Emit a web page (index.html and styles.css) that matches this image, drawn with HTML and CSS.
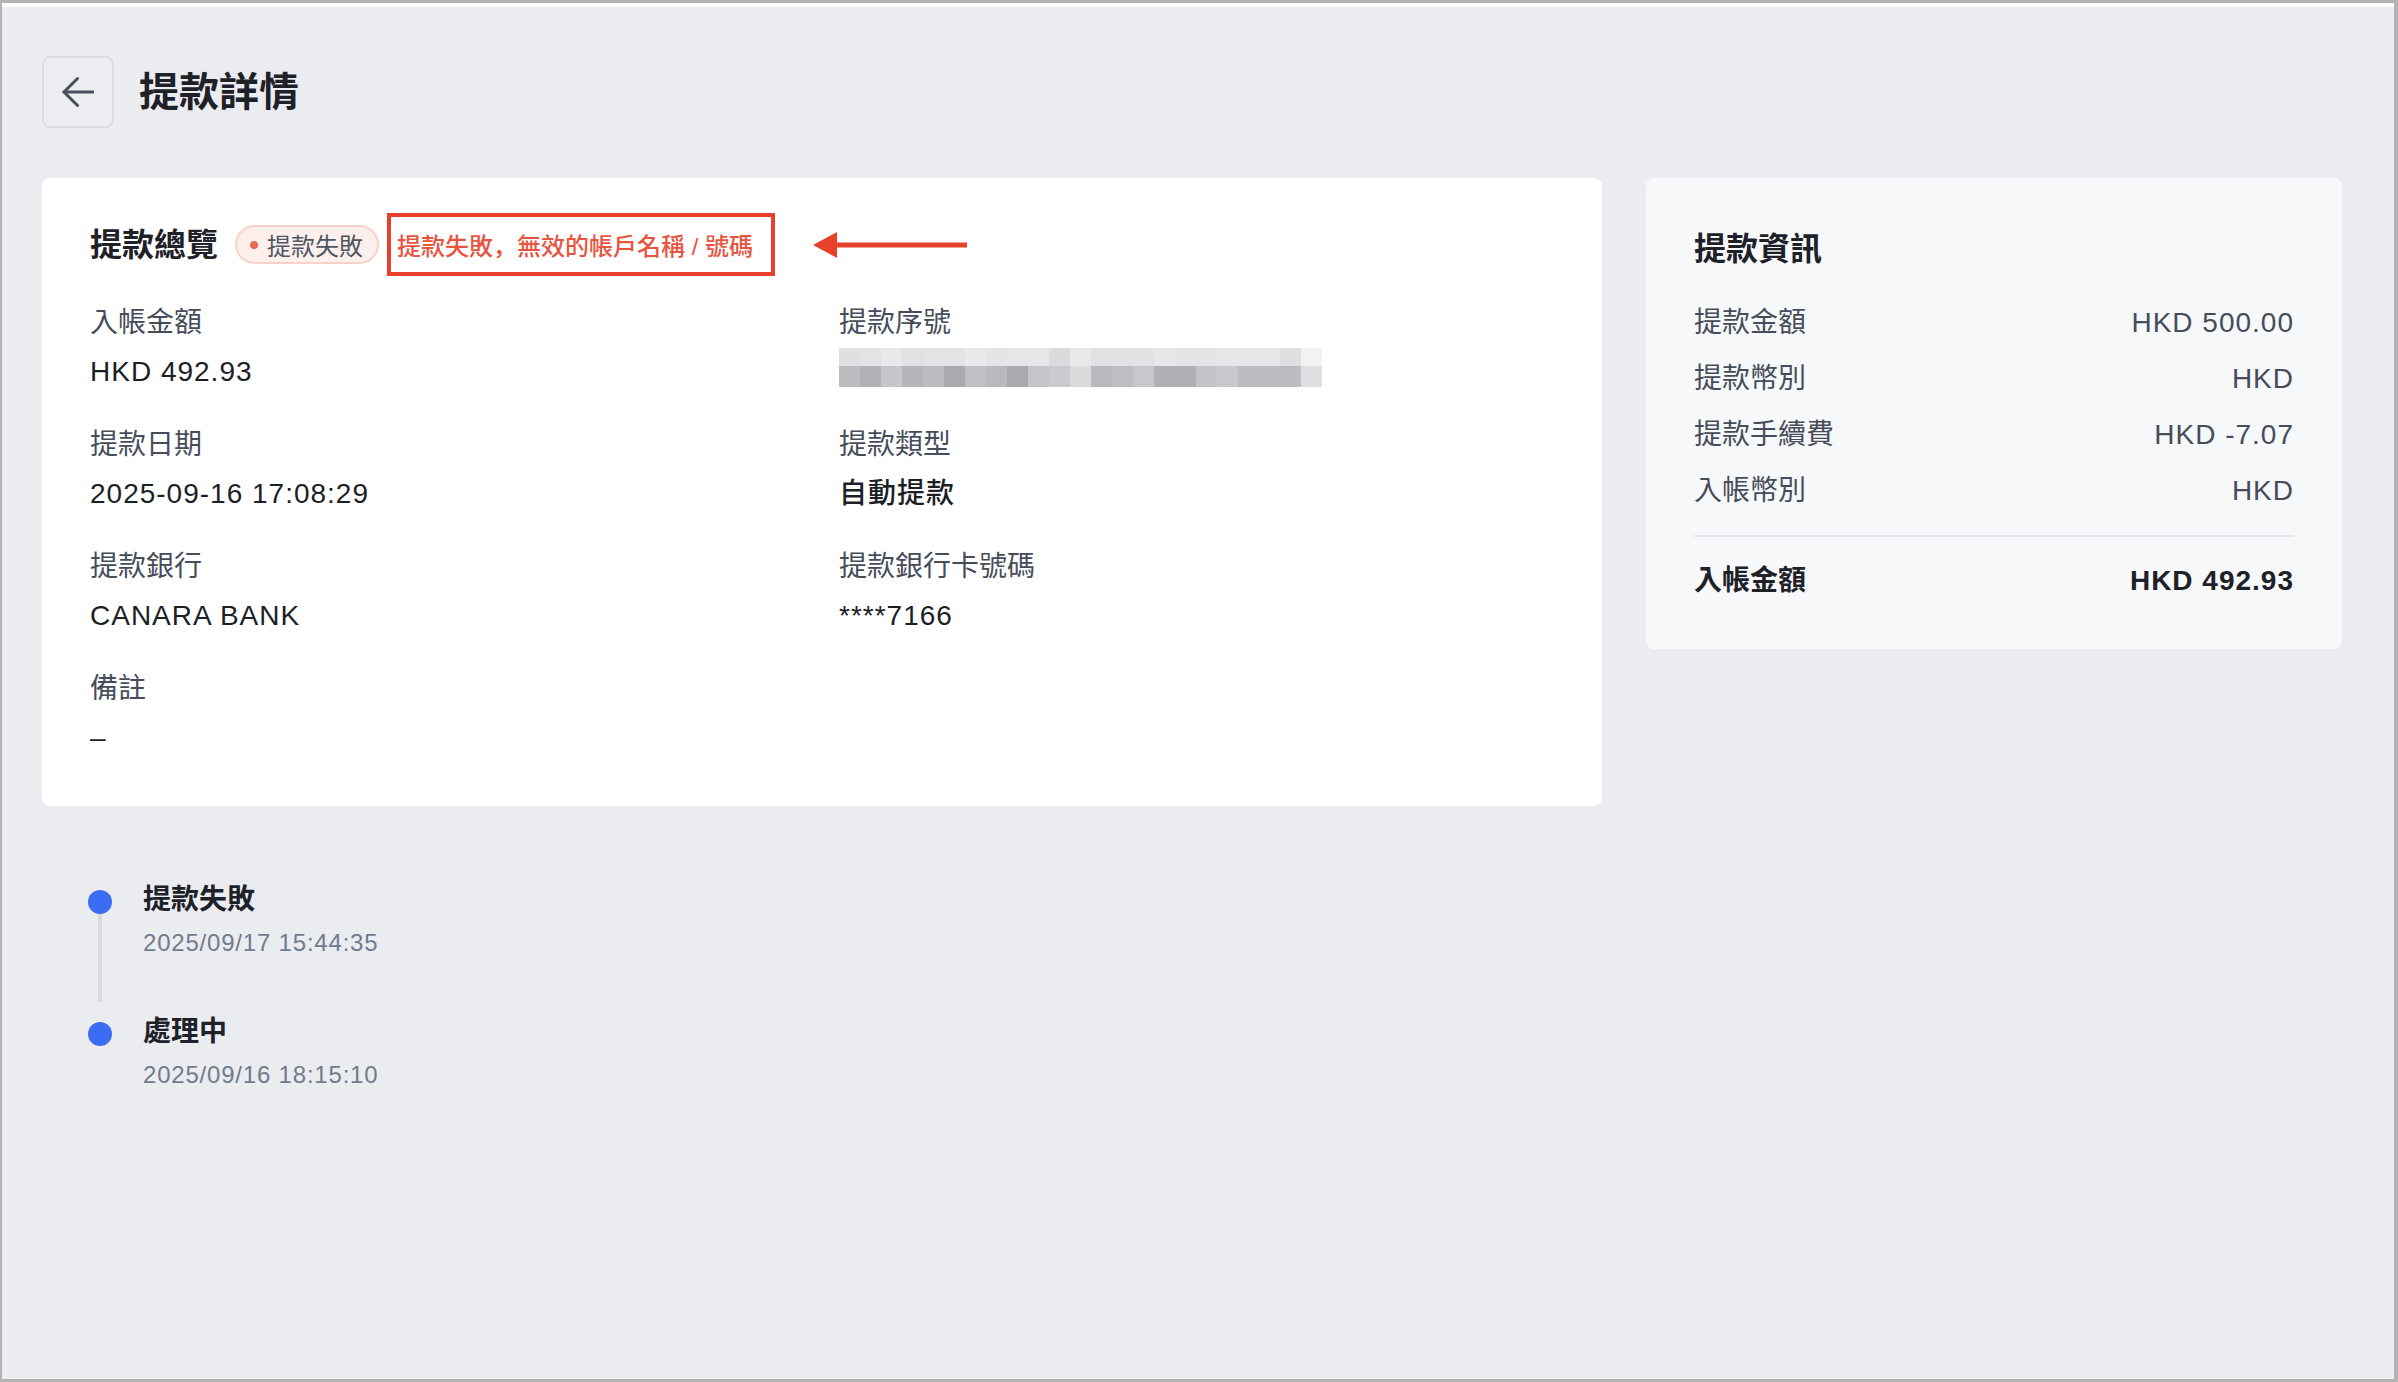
FILE: index.html
```html
<!DOCTYPE html>
<html lang="zh-Hant">
<head>
    <meta charset="UTF-8">
    <meta name="viewport" content="width=device-width, initial-scale=1.0">
    <title>提款詳情</title>
    <link rel="stylesheet" href="styles.css">
</head>
<body>
    <div class="frame">
        <div class="topline"></div>
        <div class="page">
            <div class="header">
                <button class="back-btn" type="button">
                    <svg width="32" height="32" viewBox="0 0 32 32" fill="none" stroke="#4a505e" stroke-width="3" stroke-linecap="round" stroke-linejoin="round">
                        <path d="M2 16H31"/>
                        <path d="M15.5 2.5L2 16L15.5 29.5"/>
                    </svg>
                </button>
                <h1>提款詳情</h1>
            </div>

            <div class="cards">
                <div class="card main-card">
                    <div class="card-head">
                        <h2>提款總覽</h2>
                        <span class="badge"><span class="badge-dot"></span>提款失敗</span>
                        <span class="fail-reason">提款失敗<span class="punct">，</span>無效的帳戶名稱 / 號碼</span>
                        <svg class="pointer" width="154" height="26" viewBox="0 0 154 26">
                            <polygon points="0,13 24,0 24,26" fill="#e8412a"/>
                            <rect x="22" y="10.5" width="132" height="5" fill="#e8412a"/>
                        </svg>
                    </div>

                    <div class="fields">
                        <div class="field">
                            <p class="label">入帳金額</p>
                            <p class="value">HKD 492.93</p>
                        </div>
                        <div class="field">
                            <p class="label">提款序號</p>
                            <div class="blur">
                                <div class="blur-top"></div>
                                <div class="blur-bottom"></div>
                            </div>
                        </div>
                        <div class="field">
                            <p class="label">提款日期</p>
                            <p class="value">2025-09-16 17:08:29</p>
                        </div>
                        <div class="field">
                            <p class="label">提款類型</p>
                            <p class="value">自動提款</p>
                        </div>
                        <div class="field">
                            <p class="label">提款銀行</p>
                            <p class="value">CANARA BANK</p>
                        </div>
                        <div class="field">
                            <p class="label">提款銀行卡號碼</p>
                            <p class="value">****7166</p>
                        </div>
                        <div class="field">
                            <p class="label">備註</p>
                            <p class="value">–</p>
                        </div>
                    </div>
                </div>

                <div class="card info-card">
                    <h2>提款資訊</h2>
                    <div class="info-rows">
                        <div class="info-row"><span>提款金額</span><span class="num">HKD 500.00</span></div>
                        <div class="info-row"><span>提款幣別</span><span class="num">HKD</span></div>
                        <div class="info-row"><span>提款手續費</span><span class="num">HKD -7.07</span></div>
                        <div class="info-row"><span>入帳幣別</span><span class="num">HKD</span></div>
                    </div>
                    <div class="divider"></div>
                    <div class="info-row total"><span>入帳金額</span><span class="num">HKD 492.93</span></div>
                </div>
            </div>

            <div class="timeline">
                <div class="tl-item">
                    <div class="tl-axis">
                        <span class="tl-dot"></span>
                        <span class="tl-line"></span>
                    </div>
                    <div class="tl-body">
                        <p class="tl-title">提款失敗</p>
                        <p class="tl-time">2025/09/17 15:44:35</p>
                    </div>
                </div>
                <div class="tl-item">
                    <div class="tl-axis">
                        <span class="tl-dot"></span>
                    </div>
                    <div class="tl-body">
                        <p class="tl-title">處理中</p>
                        <p class="tl-time">2025/09/16 18:15:10</p>
                    </div>
                </div>
            </div>
        </div>
    </div>
</body>
</html>
```

FILE: styles.css
```css
* {
    box-sizing: border-box;
}
body {
    margin: 0;
    font-family: "Liberation Sans", "Noto Sans CJK TC", sans-serif;
    color: #1f2129;
}
p {
    margin: 0;
}
.frame {
    height: 1382px;
    border-style: solid;
    border-color: #b3b3b3;
    border-width: 3px 4px 3px 2px;
    background: #ebecf0;
    overflow: hidden;
}
.topline {
    height: 4px;
    background: #fff;
}
.page {
    padding: 49px 52px 0 40px;
}

/* header */
.header {
    display: flex;
    align-items: center;
    gap: 25px;
    height: 72px;
}
.back-btn {
    width: 72px;
    height: 72px;
    padding: 0;
    border: 2px solid #dcdde3;
    border-radius: 8px;
    background: #ecedf1;
    display: flex;
    align-items: center;
    justify-content: center;
    cursor: pointer;
}
h1 {
    margin: 0;
    font-size: 40px;
    font-weight: 700;
    line-height: 56px;
}

/* cards */
.cards {
    display: flex;
    align-items: flex-start;
    gap: 44px;
    margin-top: 50px;
}
.card {
    border-radius: 8px;
}
.main-card {
    flex: 1;
    background: #fff;
    padding: 35px 48px 48px;
}
.card h2 {
    margin: 0;
    font-size: 32px;
    font-weight: 700;
    line-height: 44px;
}
.card-head {
    display: flex;
    align-items: center;
    height: 63px;
}
.badge {
    display: inline-flex;
    align-items: center;
    height: 39px;
    margin-left: 17px;
    padding: 0 14px 0 13px;
    border: 2px solid #f6d2c8;
    border-radius: 20px;
    background: #fdf0ec;
    font-size: 24px;
    color: #4f5563;
}
.badge-dot {
    width: 8px;
    height: 8px;
    border-radius: 50%;
    background: #e86a50;
    margin-right: 9px;
}
.fail-reason {
    display: flex;
    align-items: center;
    height: 63px;
    margin-left: 8px;
    padding: 0 18px 0 6px;
    border: 4px solid #e8402a;
    font-size: 24px;
    font-weight: 500;
    color: #e8553f;
}
.punct {
    font-family: "Noto Sans CJK SC", sans-serif;
}
.pointer {
    margin-left: 38px;
}
.fields {
    display: grid;
    grid-template-columns: 1fr 1fr;
    column-gap: 34px;
    row-gap: 33px;
    margin-top: 27px;
}
.label {
    font-size: 28px;
    line-height: 40px;
    color: #474c5b;
}
.value {
    margin-top: 9px;
    font-size: 28px;
    line-height: 40px;
    font-weight: 500;
    letter-spacing: 1px;
    color: #1d1f26;
}
.blur {
    width: 483px;
    margin-top: 5px;
}
.blur-top {
    height: 18px;
    background: linear-gradient(to right,
        #e0e0e2 0 21px, #e2e3e5 21px 42px, #e9e9eb 42px 63px, #e0e1e3 63px 84px,
        #e3e3e5 84px 126px, #e9e9eb 126px 147px, #e4e5e7 147px 168px,
        #e6e6e8 168px 210px, #dadbdd 210px 231px, #e9e9eb 231px 252px,
        #e1e1e3 252px 273px, #e1e2e4 273px 315px, #e7e7e9 315px 336px,
        #e3e4e6 336px 378px, #e6e6e8 378px 420px, #e7e7e9 420px 441px,
        #dedfe1 441px 462px, #f2f2f3 462px 483px);
}
.blur-bottom {
    height: 21px;
    background: linear-gradient(to right,
        #bcbdc0 0 21px, #b1b2b6 21px 42px, #c6c7ca 42px 63px, #b4b5b9 63px 84px,
        #bbbcbf 84px 105px, #a9aaae 105px 126px, #c0c1c4 126px 147px,
        #b8b9bc 147px 168px, #a9aaad 168px 189px, #c4c5c8 189px 210px,
        #cacbce 210px 231px, #dadbdd 231px 252px, #b8b9bc 252px 273px,
        #bdbec1 273px 294px, #c7c8cb 294px 315px, #afb0b4 315px 357px,
        #c3c4c7 357px 378px, #c7c8cb 378px 399px, #bcbdc0 399px 462px,
        #dfe0e2 462px 483px);
}

/* info card */
.info-card {
    width: 696px;
    background: #f7f8fa;
    padding: 49px 48px 48px;
}
.info-rows {
    display: flex;
    flex-direction: column;
    gap: 16px;
    margin-top: 32px;
}
.info-row {
    display: flex;
    justify-content: space-between;
    font-size: 28px;
    line-height: 40px;
    color: #474c5b;
}
.info-row .num {
    letter-spacing: 1px;
}
.divider {
    height: 2px;
    margin: 24px 0;
    background: #e4e6eb;
}
.info-row.total {
    font-weight: 700;
    color: #1f2129;
}

/* timeline */
.timeline {
    margin-top: 74px;
    padding-left: 46px;
}
.tl-item {
    display: flex;
    gap: 31px;
    padding-bottom: 51px;
}
.tl-axis {
    width: 24px;
    display: flex;
    flex-direction: column;
    align-items: center;
    margin-bottom: -41px;
}
.tl-dot {
    width: 24px;
    height: 24px;
    margin-top: 10px;
    border-radius: 50%;
    background: #3d6cf4;
    flex-shrink: 0;
}
.tl-line {
    flex: 1;
    width: 4px;
    background: #d8dae3;
}
.tl-title {
    font-size: 28px;
    font-weight: 700;
    line-height: 40px;
    color: #1f2129;
}
.tl-time {
    margin-top: 5px;
    font-size: 24px;
    line-height: 36px;
    letter-spacing: 0.8px;
    color: #737a8d;
}
```
